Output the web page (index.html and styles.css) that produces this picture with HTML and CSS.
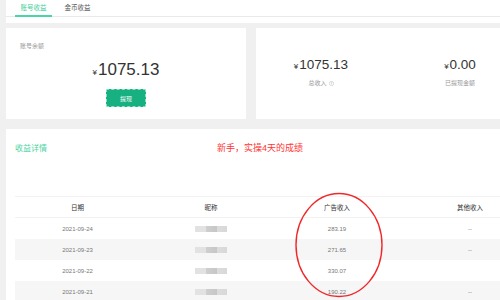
FILE: index.html
```html
<!DOCTYPE html>
<html lang="zh-CN">
<head>
    <meta charset="UTF-8">
    <meta name="viewport" content="width=device-width, initial-scale=1.0">
    <title>账号收益</title>
    <link rel="stylesheet" href="styles.css">
</head>
<body>

<div class="tabs">
    <div class="tab-list">
        <span class="tab active">账号收益</span>
        <span class="tab">金币收益</span>
    </div>
</div>

<div class="summary">
    <div class="card balance">
        <div class="label">账号余额</div>
        <div class="big-amount"><span class="yen">¥</span>1075.13</div>
        <button class="withdraw">提现</button>
    </div>
    <div class="card stats">
        <div class="stat">
            <div class="amount"><span class="yen">¥</span>1075.13</div>
            <div class="label">总收入
                <svg class="help" width="5" height="5" viewBox="0 0 10 10">
                    <circle cx="5" cy="5" r="4.3" fill="none" stroke="#bbb" stroke-width="1"/>
                    <path d="M3.6 3.9 Q3.6 2.6 5 2.6 Q6.4 2.6 6.4 3.8 Q6.4 4.6 5 5.2 L5 6.2" fill="none" stroke="#bbb" stroke-width="1"/>
                    <circle cx="5" cy="7.6" r="0.6" fill="#bbb"/>
                </svg>
            </div>
        </div>
        <div class="stat">
            <div class="amount"><span class="yen">¥</span>0.00</div>
            <div class="label">已提现金额</div>
        </div>
    </div>
</div>

<div class="card detail">
    <div class="detail-head">
        <span class="detail-title">收益详情</span>
        <span class="note">新手，实操4天的成绩</span>
    </div>
    <table class="income">
        <thead>
        <tr>
            <th class="c-date">日期</th>
            <th class="c-name">昵称</th>
            <th class="c-ad">广告收入</th>
            <th class="c-other">其他收入</th>
        </tr>
        </thead>
        <tbody>
        <tr>
            <td>2021-09-24</td>
            <td><span class="blur"></span></td>
            <td>283.19</td>
            <td>--</td>
        </tr>
        <tr>
            <td>2021-09-23</td>
            <td><span class="blur"></span></td>
            <td>271.65</td>
            <td>--</td>
        </tr>
        <tr>
            <td>2021-09-22</td>
            <td><span class="blur"></span></td>
            <td>330.07</td>
            <td></td>
        </tr>
        <tr>
            <td>2021-09-21</td>
            <td><span class="blur"></span></td>
            <td>190.22</td>
            <td>--</td>
        </tr>
        </tbody>
    </table>
    <!-- 红圈标注 -->
    <svg class="circle-mark" width="92" height="108" viewBox="0 0 92 108">
        <ellipse cx="46" cy="54" rx="43" ry="51.5" fill="none" stroke="#f0282a" stroke-width="1.4"/>
    </svg>
</div>

</body>
</html>
```

FILE: styles.css
```css
body {
    font-family: "Liberation Sans", "Noto Sans CJK SC", sans-serif;
    margin: 0;
    padding-left: 6px;
    background-color: #f0f0f0;
    overflow: hidden;
    height: 300px;
}
.tabs {
    background-color: #fff;
    height: 23px;
    padding-left: 9px;
    box-sizing: border-box;
    position: relative;
}
.tabs::after {
    content: "";
    position: absolute;
    left: 0;
    right: 0;
    top: 16px;
    height: 1px;
    background-color: #e9e9e9;
}
.tab-list {
    display: flex;
    gap: 7px;
    height: 17px;
}
.tab {
    width: 37px;
    text-align: center;
    font-size: 6.5px;
    line-height: 16px;
    color: #555;
    box-sizing: border-box;
}
.tab.active {
    color: #3fcf9c;
    border-bottom: 2px solid #4ad6a4;
    position: relative;
    z-index: 1;
}
.summary {
    display: flex;
    gap: 10px;
    margin-top: 5px;
    height: 91px;
}
.card {
    background-color: #fff;
}
.label {
    font-size: 6px;
    line-height: 8px;
    color: #999;
}
.yen {
    font-size: 8px;
    margin-right: 1px;
}
.balance {
    width: 241px;
    padding: 14px 14px 0;
    box-sizing: border-box;
    display: flex;
    flex-direction: column;
    align-items: center;
}
.balance .label {
    align-self: flex-start;
}
.big-amount {
    margin-top: 10px;
    font-size: 17px;
    line-height: 20px;
    color: #333;
}
.withdraw {
    margin-top: 6px;
    width: 40px;
    height: 18px;
    padding: 0;
    border: 1px dashed #8fe0c2;
    background-color: #17b080;
    color: #fff;
    font-family: inherit;
    font-size: 6px;
    border-radius: 1px;
}
.stats {
    flex: 1;
    display: flex;
    gap: 59px;
    padding: 29px 0 0 25px;
    box-sizing: border-box;
}
.stat {
    width: 80px;
    display: flex;
    flex-direction: column;
    align-items: center;
}
.amount {
    font-size: 13.5px;
    line-height: 16px;
    color: #333;
}
.stat .label {
    margin-top: 4px;
    display: flex;
    align-items: center;
    gap: 2px;
}
.detail {
    margin-top: 10px;
    height: 171px;
    padding: 14px 0 0 9px;
    box-sizing: border-box;
    position: relative;
    overflow: hidden;
}
.detail-head {
    display: flex;
    align-items: baseline;
    height: 10px;
}
.detail-title {
    font-size: 8px;
    line-height: 10px;
    color: #4bd3a3;
}
.note {
    margin-left: 170px;
    font-size: 9px;
    line-height: 10px;
    color: #ff3434;
}
.income {
    margin-top: 43px;
    border-collapse: collapse;
    width: 533px;
    table-layout: fixed;
}
.income th {
    height: 20px;
    font-size: 6.5px;
    font-weight: normal;
    color: #333;
    border-top: 1px solid #f2f2f2;
    border-bottom: 1px solid #f2f2f2;
    padding: 0;
}
.income td {
    height: 21px;
    font-size: 6px;
    color: #777;
    text-align: center;
    padding: 0;
}
.income tbody tr:nth-child(even) {
    background-color: #f6f6f6;
}
.c-date { width: 125px; }
.c-name { width: 142px; }
.c-ad { width: 110px; }
.c-other { width: 156px; }
.blur {
    display: inline-block;
    width: 32px;
    height: 6px;
    vertical-align: middle;
    background: linear-gradient(90deg, #e2e2e2 0, #e2e2e2 35%, #cfcfcf 35%, #c6c6c6 70%, #dcdcdc 70%, #d8d8d8 100%);
}
.circle-mark {
    position: absolute;
    left: 287px;
    top: 62px;
}
```
